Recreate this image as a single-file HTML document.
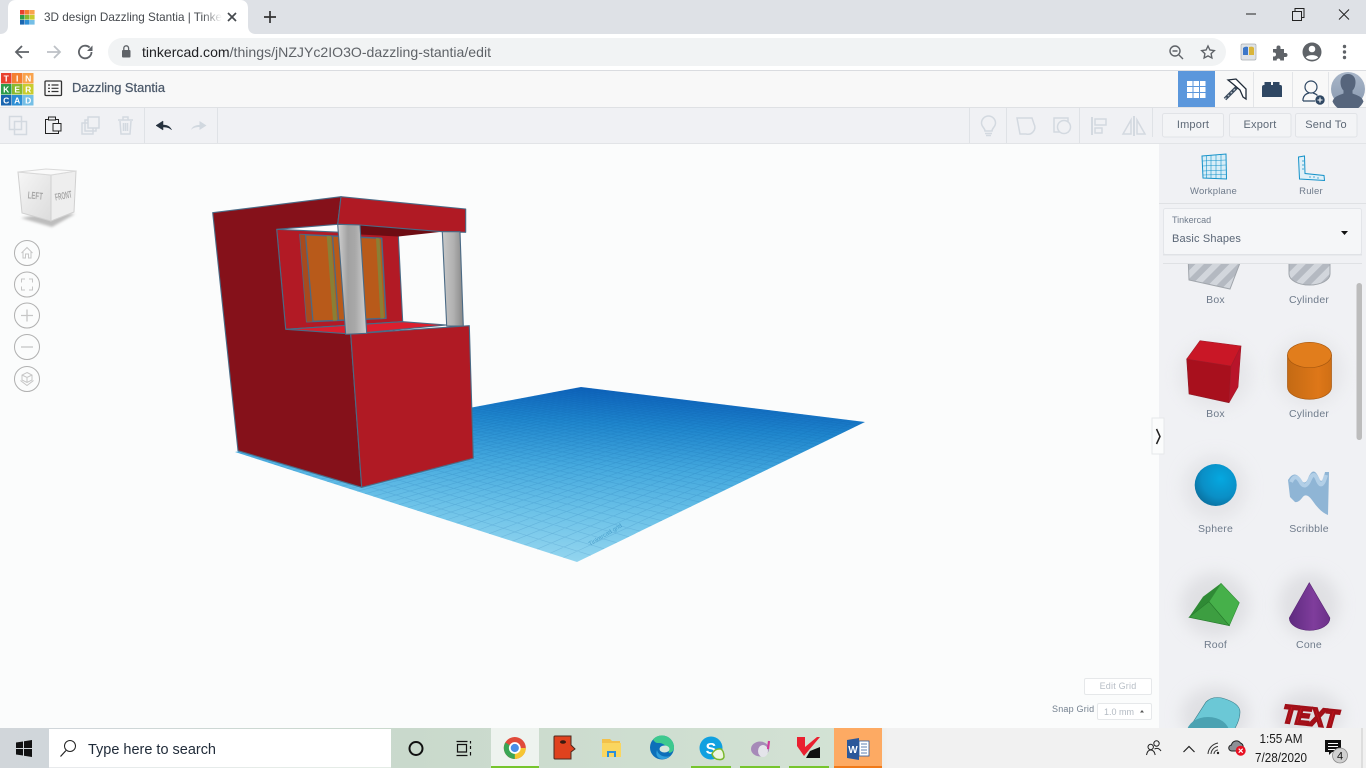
<!DOCTYPE html>
<html lang="en"><head><meta charset="utf-8"><title>3D design Dazzling Stantia | Tinkercad</title>
<style>
html,body{margin:0;padding:0;width:1366px;height:768px;overflow:hidden;background:#fbfcfc}
svg{display:block;position:absolute;left:0;top:0}
text{font-family:"Liberation Sans",sans-serif}
.l{font-size:10.5px;fill:#6f7b8b;text-anchor:middle;letter-spacing:.2px}
.ic{fill:none;stroke:#d3d9e0;stroke-width:1.5}
.nav{fill:none;stroke:#b0b0b0;stroke-width:1}
.nv2{fill:none;stroke:#c6c6c6;stroke-width:1}
</style></head><body>
<svg width="1366" height="768" viewBox="0 0 1366 768" xmlns="http://www.w3.org/2000/svg">
<defs>
<linearGradient id="gp" gradientUnits="userSpaceOnUse" x1="581" y1="387" x2="571" y2="562"><stop offset="0" stop-color="#0d62bb"/><stop offset=".2" stop-color="#1f86cd"/><stop offset=".45" stop-color="#45a9de"/><stop offset=".72" stop-color="#6cc2e8"/><stop offset="1" stop-color="#93d5ef"/></linearGradient>
<linearGradient id="p1" x1="0" x2="1" y1="0" y2="0"><stop offset="0" stop-color="#d2d2d2"/><stop offset=".35" stop-color="#a2a2a2"/><stop offset=".6" stop-color="#a8a8a8"/><stop offset="1" stop-color="#cfcfcf"/></linearGradient>
<linearGradient id="p2" x1="0" x2="1" y1="0" y2="0"><stop offset="0" stop-color="#c8c8c8"/><stop offset=".55" stop-color="#b0b0b0"/><stop offset="1" stop-color="#868686"/></linearGradient>
<linearGradient id="tb" x1="0" x2="1" y1="0" y2="0"><stop offset="0" stop-color="#d1d6da"/><stop offset=".045" stop-color="#d0d6da"/><stop offset=".3" stop-color="#c9d9cc"/><stop offset=".62" stop-color="#d3e2d4"/><stop offset=".65" stop-color="#f1f1f1"/><stop offset="1" stop-color="#f1f1f1"/></linearGradient>
<linearGradient id="cube" x1="0" x2="1" y1="0" y2="1"><stop offset="0" stop-color="#f6f6f6"/><stop offset="1" stop-color="#dcdcdc"/></linearGradient>
<linearGradient id="ocyl" x1="0" x2="1" y1="0" y2="0"><stop offset="0" stop-color="#c46a14"/><stop offset=".7" stop-color="#de7718"/><stop offset="1" stop-color="#cf6f15"/></linearGradient>
<radialGradient id="sph" cx=".62" cy=".35" r=".75"><stop offset="0" stop-color="#05a8e0"/><stop offset=".6" stop-color="#0a8fc6"/><stop offset="1" stop-color="#0a6a98"/></radialGradient>
<linearGradient id="con" x1="0" x2="1" y1="0" y2="0"><stop offset="0" stop-color="#5f2b80"/><stop offset=".6" stop-color="#7f3d9c"/><stop offset="1" stop-color="#6c3189"/></linearGradient>
<linearGradient id="av" x1="0" x2="0" y1="0" y2="1"><stop offset="0" stop-color="#a8b6c9"/><stop offset="1" stop-color="#8a9ab0"/></linearGradient>
<linearGradient id="fade" x1="0" x2="1" y1="0" y2="0"><stop offset="0" stop-color="#fff" stop-opacity="0"/><stop offset="1" stop-color="#fff"/></linearGradient>
<pattern id="st" width="12" height="12" patternUnits="userSpaceOnUse" patternTransform="rotate(45)"><rect width="12" height="12" fill="#b4b9c1"/><rect width="6" height="12" fill="#d2d6dc"/></pattern>
<filter id="b" x="-50%" y="-50%" width="200%" height="200%"><feGaussianBlur stdDeviation="8"/></filter>
<filter id="b2" x="-50%" y="-50%" width="200%" height="200%"><feGaussianBlur stdDeviation="1.2"/></filter>
<clipPath id="sideclip"><rect x="1160" y="264" width="206" height="464"/></clipPath>
</defs>

<!-- browser chrome -->
<rect width="1366" height="34" fill="#dee1e6"/>
<rect y="34" width="1366" height="36" fill="#fff"/>
<rect y="70" width="1366" height="1" fill="#dadce0"/>
<path d="M0 34C5 34 8 31 8 26V8C8 3 11 0 16 0H240C245 0 248 3 248 8V26C248 31 251 34 256 34Z" fill="#fff"/>
<g>
<rect x="20" y="10" width="4.600" height="4.600" fill="#e8412e"/><rect x="25" y="10" width="4.600" height="4.600" fill="#f47f30"/><rect x="30" y="10" width="4.600" height="4.600" fill="#f9a34d"/>
<rect x="20" y="15" width="4.600" height="4.600" fill="#2e9b4a"/><rect x="25" y="15" width="4.600" height="4.600" fill="#8ab92e"/><rect x="30" y="15" width="4.600" height="4.600" fill="#c9cc2e"/>
<rect x="20" y="20" width="4.600" height="4.600" fill="#1a66b0"/><rect x="25" y="20" width="4.600" height="4.600" fill="#2d8fd5"/><rect x="30" y="20" width="4.600" height="4.600" fill="#75bfe6"/>
</g>
<text x="44" y="21" font-size="12" fill="#45494e" textLength="178" lengthAdjust="spacingAndGlyphs">3D design Dazzling Stantia | Tinke</text>
<rect x="202" y="8" width="20" height="20" fill="url(#fade)"/>
<path d="M228 13l8 8M236 13l-8 8" stroke="#45494e" stroke-width="1.700" fill="none"/>
<path d="M270 11v12M264 17h12" stroke="#333" stroke-width="1.700" fill="none"/>
<path d="M1246 14h10" stroke="#222" stroke-width="1"/>
<path d="M1292.500 11.500h9v9h-9zM1295 11v-2.500h9v9h-2.500" stroke="#222" stroke-width="1" fill="none"/>
<path d="M1339 9.500l10 10M1349 9.500l-10 10" stroke="#222" stroke-width="1" fill="none"/>

<path d="M29 52H17M22 46l-6 6 6 6" stroke="#5f6368" stroke-width="1.800" fill="none"/>
<path d="M47 52h12M54 46l6 6-6 6" stroke="#bdc1c6" stroke-width="1.800" fill="none"/>
<path d="M91.500 52a6.300 6.300 0 1 1-1.900-4.500" stroke="#5f6368" stroke-width="1.800" fill="none"/><path d="M92.500 45.500v5.500h-5.500z" fill="#5f6368"/>
<rect x="108" y="38" width="1118" height="28" rx="14" fill="#f1f3f4"/>
<rect x="122" y="50" width="8.500" height="7.500" rx="1" fill="#5f6368"/><path d="M123.800 50v-1.800a2.400 2.400 0 0 1 4.800 0V50" stroke="#5f6368" stroke-width="1.300" fill="none"/>
<text x="142" y="57" font-size="14" fill="#5f6368" textLength="349" lengthAdjust="spacingAndGlyphs"><tspan fill="#202124">tinkercad.com</tspan>/things/jNZJYc2IO3O-dazzling-stantia/edit</text>
<circle cx="1175" cy="51" r="5" stroke="#5f6368" stroke-width="1.400" fill="none"/><path d="M1172.500 51h5M1179 55l4 4" stroke="#5f6368" stroke-width="1.400" fill="none"/>
<path d="M1208 46l1.900 4 4.400.6-3.200 3 .8 4.400-3.900-2.100-3.900 2.100.8-4.400-3.200-3 4.400-.6z" stroke="#5f6368" stroke-width="1.400" fill="none"/>
<rect x="1241" y="44" width="15" height="16" rx="1.500" fill="#dfe3e6" stroke="#a9aeb2" stroke-width=".7"/><path d="M1243 48q2-2 5-1v8h-5z" fill="#3d78c9"/><path d="M1249 47q4-1 5 1v7h-5z" fill="#d9b53a"/>
<path d="M1273 49h3.500v-1.500a2 2 0 0 1 4 0V49h3.500v4h1.500a2 2 0 0 1 0 4H1284v3.500h-3.800v-1a2 2 0 0 0-3.500 0v1H1273v-4h1a2 2 0 0 0 0-4h-1z" fill="#5f6368"/>
<circle cx="1312" cy="52" r="9.500" fill="#5f6368"/><circle cx="1312" cy="49" r="3.300" fill="#fff"/><path d="M1305.800 57.500c1.500-3.200 10.900-3.200 12.400 0-3 3-9.400 3-12.400 0z" fill="#fff"/>
<circle cx="1344.500" cy="46.500" r="1.700" fill="#5f6368"/><circle cx="1344.500" cy="52" r="1.700" fill="#5f6368"/><circle cx="1344.500" cy="57.500" r="1.700" fill="#5f6368"/>

<!-- tinkercad header -->
<rect y="71" width="1366" height="36" fill="#f8f8f8"/>
<rect y="107" width="1366" height="1" fill="#dfe1e4"/>
<g font-size="8.500" font-weight="bold" fill="#fff" text-anchor="middle">
<rect x="1" y="73" width="10.500" height="10.500" fill="#e8412e"/><text x="6.200" y="81.500">T</text>
<rect x="12" y="73" width="10.500" height="10.500" fill="#f47f30"/><text x="17.200" y="81.500">I</text>
<rect x="23" y="73" width="10.500" height="10.500" fill="#f9a34d"/><text x="28.200" y="81.500">N</text>
<rect x="1" y="84" width="10.500" height="10.500" fill="#2e9b4a"/><text x="6.200" y="92.500">K</text>
<rect x="12" y="84" width="10.500" height="10.500" fill="#8ab92e"/><text x="17.200" y="92.500">E</text>
<rect x="23" y="84" width="10.500" height="10.500" fill="#c9cc2e"/><text x="28.200" y="92.500">R</text>
<rect x="1" y="95" width="10.500" height="10.500" fill="#1a66b0"/><text x="6.200" y="103.500">C</text>
<rect x="12" y="95" width="10.500" height="10.500" fill="#2d8fd5"/><text x="17.200" y="103.500">A</text>
<rect x="23" y="95" width="10.500" height="10.500" fill="#75bfe6"/><text x="28.200" y="103.500">D</text>
</g>
<rect x="45" y="81" width="16.500" height="14.500" rx="1" fill="none" stroke="#333" stroke-width="1.300"/>
<path d="M48 85h2M48 88.300h2M48 91.500h2M51.500 85h7M51.500 88.300h7M51.500 91.500h7" stroke="#333" stroke-width="1.200"/>
<text x="72" y="92" font-size="12.500" fill="#4d5a6b" stroke="#4d5a6b" stroke-width=".25" textLength="93" lengthAdjust="spacingAndGlyphs">Dazzling Stantia</text>
<rect x="1178" y="71" width="37" height="36" fill="#5b97dc"/>
<g fill="#fff"><rect x="1187" y="81" width="5.500" height="5"/><rect x="1193.500" y="81" width="5.500" height="5"/><rect x="1200" y="81" width="5.500" height="5"/><rect x="1187" y="87" width="5.500" height="5"/><rect x="1193.500" y="87" width="5.500" height="5"/><rect x="1200" y="87" width="5.500" height="5"/><rect x="1187" y="93" width="5.500" height="5"/><rect x="1193.500" y="93" width="5.500" height="5"/><rect x="1200" y="93" width="5.500" height="5"/></g>
<path d="M1253.500 72v35M1292.500 72v35M1328.500 72v35" stroke="#e3e5e8"/>
<path d="M1225 99l13-13" stroke="#3a4a5c" stroke-width="3.500"/><path d="M1225 99l13-13" stroke="#b9c1ca" stroke-width="1.200" stroke-dasharray="2 2"/>
<path d="M1228 80L1236 79L1246 89L1246 99L1243 97L1240 90L1233 84Z" fill="#fff" stroke="#1f2a38" stroke-width="1.300"/>
<path d="M1262 97V87q0-2 2-2h0.500v-3h6.500v3h2v-3h6.500v3h1q1.500 0 1.500 2v10z" fill="#2f4763"/>
<circle cx="1311" cy="87" r="6" fill="none" stroke="#2f4763" stroke-width="1.200"/>
<path d="M1303 101v-2q1-5 6-6M1313 93q3 .8 4.500 2.500M1303 101h12" fill="none" stroke="#2f4763" stroke-width="1.200"/>
<circle cx="1320" cy="100" r="4.700" fill="#2f4763"/><path d="M1317.500 100h5M1320 97.500v5" stroke="#fff" stroke-width="1.100"/>
<circle cx="1348" cy="89" r="17" fill="url(#av)"/>
<path d="M1348 74c-5 0-7.500 3.500-7.500 8 0 3.500 1 6.500 3 8.500v3c-3 1.500-9 2-11 8a17 17 0 0 0 31 0c-2-6-8-6.500-11-8v-3c2-2 3-5 3-8.500 0-4.500-2.500-8-7.500-8z" fill="#56657c"/>

<!-- toolbar -->
<rect y="108" width="1366" height="35" fill="#f0f1f4"/>
<rect y="143" width="1366" height="1" fill="#e2e4e7"/>
<path d="M144.500 108v35M217.500 108v35M969.500 108v35M1006.500 108v35M1079.500 108v35M1152.500 108v29" stroke="#dfe2e6"/>
<g class="ic">
<rect x="9.500" y="116.500" width="12" height="13"/><rect x="14.500" y="121.500" width="12" height="13"/>
<rect x="82" y="123" width="11" height="11"/><rect x="85" y="120" width="11" height="11" /><rect x="88" y="117" width="11" height="11" fill="#f0f1f4"/>
<path d="M120 121l1 13h9l1-13M118 120h15M123 120v-3h5v3M123.500 123v8M125.500 123v8M127.500 123v8"/>
<path d="M985 131c0-3-3.500-4-3.500-8a7 7 0 0 1 14 0c0 4-3.500 5-3.500 8zM985 133.500h7M986 135.500h5" />
<path d="M1017 118h15l2 6a7 7 0 0 1-8 10h-6z"/>
<rect x="1054" y="118" width="14" height="14" /><circle cx="1064" cy="127" r="6.500" fill="#f0f1f4"/>
<path d="M1092 117v18" stroke-width="2"/><rect x="1095" y="119" width="11" height="6"/><rect x="1095" y="128" width="7" height="5"/>
<path d="M1134 116v20" stroke-width="2"/><path d="M1131 120v14h-8zM1137 120v14h8z"/>
</g>
<rect x="45.500" y="119.500" width="13" height="14" fill="none" stroke="#222" stroke-width="1"/><rect x="48.500" y="117" width="7" height="3" fill="#f0f1f4" stroke="#222" stroke-width="1"/><rect x="53" y="123.500" width="8" height="7.500" fill="#f0f1f4" stroke="#222" stroke-width="1"/>
<path d="M171.500 130c-1-3.500-4.500-5-8.500-5v-4l-7 4.500 7 4.500v-3c3 0 6.500 .5 8.500 3z" fill="#26323f" stroke="#26323f" stroke-width=".5"/>
<path d="M191 130c1-3.500 4.500-5 8.500-5v-4l7 4.500-7 4.500v-3c-3 0-6.500 .5-8.500 3z" fill="#d1d8df"/>
<g fill="#f3f4f6" stroke="#e1e3e7"><rect x="1162.500" y="113.500" width="61" height="23.500" rx="2"/><rect x="1229.500" y="113.500" width="61.500" height="23.500" rx="2"/><rect x="1295.500" y="113.500" width="61.500" height="23.500" rx="2"/></g>
<g font-size="11" fill="#5d6876" text-anchor="middle" letter-spacing=".2"><text x="1193" y="128">Import</text><text x="1260" y="128">Export</text><text x="1326" y="128">Send To</text></g>

<!-- canvas -->
<rect y="144" width="1159" height="584" fill="#fbfcfc"/>

<!-- workplane -->
<polygon points="581,387 865,422 577,562 235,452" fill="url(#gp)"/>
<g id="grid" stroke="#0a5a9e" stroke-opacity=".16" stroke-width=".6"></g>
<text x="590" y="546" font-size="6" fill="#2c86b8" opacity=".6" transform="rotate(-31 590 546)">Tinkercad grid</text>

<!-- model -->
<g stroke="#4a6a85" stroke-width="1.100" stroke-linejoin="round">
<polygon points="276.700,229.300 398.300,235 402.700,321.700 285.700,329.300" fill="#b21a25"/>
<polygon points="360,225 442,231.700 398.300,236.500 360,234.500" fill="#6d0c13" stroke="none"/>
<polygon points="300,234.500 381.700,238.300 386,318.300 306.700,321.700" fill="#b85a1a" stroke-width="1.500"/>
<polygon points="300,234.500 305.500,235 313,321.500 306.700,321.700" fill="#a84a1e" stroke="none"/>
<polygon points="326.700,235.700 331,236 337,320.500 333,320.700" fill="#8a7f35" stroke="none"/>
<polygon points="376,238 379.500,238.200 384,318.300 380.500,318.500" fill="#8a7f35" stroke="none"/>
<path d="M305.500 235l7.500 86.500M332.500 236l6 85" fill="none" stroke-width="1.300"/>
<polygon points="285.700,329.300 402.700,321.700 446.700,325 350.700,334" fill="#db1f2e"/>
<polygon points="212.700,212.700 341,196.700 337.700,224.300 276.700,229.300 285.700,329.300 350.700,334 361.700,487.300 238,450.700" fill="#85111a"/>
<polygon points="341,196.700 465.700,209 465.700,232.300 442,231.700 360,225 337.700,224.300" fill="#b01a24"/>
<polygon points="442.300,231.700 460,231.700 463.300,326 446.700,326" fill="url(#p2)"/>
<polygon points="350.700,334 469.300,325.700 473.300,458.300 361.700,487.300" fill="#b01a24"/>
<polygon points="337.700,224.300 360,225 366.700,333.300 345.700,334.300" fill="url(#p1)"/>
</g>

<!-- cube -->
<polygon points="21,218 52,227 75,214 52,212" fill="#bdbdbd" filter="url(#b2)"/>
<polygon points="18,172 51,175 51,221 22,213" fill="url(#cube)" stroke="#d0d0d0"/>
<polygon points="51,175 76,171 74,212 51,221" fill="#eeeeee" stroke="#d0d0d0"/>
<polygon points="18,172 46,169 76,171 51,175" fill="#fafafa" stroke="#d9d9d9"/>
<text x="35" y="199" font-size="10" font-weight="bold" fill="#a6a6a6" text-anchor="middle" transform="rotate(5 35 199)" textLength="15" lengthAdjust="spacingAndGlyphs">LEFT</text>
<text x="64" y="199" font-size="10" font-weight="bold" fill="#a6a6a6" text-anchor="middle" transform="rotate(-11 64 199)" textLength="17" lengthAdjust="spacingAndGlyphs">FRONT</text>
<!-- nav -->
<g class="nav"><circle cx="27" cy="253" r="12.500"/><circle cx="27" cy="284.500" r="12.500"/><circle cx="27" cy="315.500" r="12.500"/><circle cx="27" cy="347" r="12.500"/><circle cx="27" cy="379" r="12.500"/></g>
<g class="nv2">
<path d="M21.500 253l5.500-5.500 5.500 5.500M23 252v6h2.500v-4h3v4h2.500v-6"/>
<path d="M21.500 282.500v-3.500h3.500M29 279h3.500v3.500M32.500 286.500v3.500H29M25 290h-3.500v-3.500"/>
<path d="M21 315.500h12M27 309.500v12" stroke-width="1.300"/>
<path d="M21 347h12" stroke-width="1.300"/>
<path d="M27 372.500l5 2.500v5l-5 2.500-5-2.500v-5zM22 375l5 2.500 5-2.500M27 377.500v5M20.500 380.500l6.500 5 6.500-5"/>
</g>
<g fill="#fff" stroke="#e6e8ea"><rect x="1084.500" y="678.500" width="67" height="16" rx="1.500"/><rect x="1097.500" y="703.500" width="54" height="16" rx="1.500"/></g>
<text x="1118" y="689" font-size="9" fill="#b7bec6" text-anchor="middle" letter-spacing=".2">Edit Grid</text>
<text x="1052" y="712" font-size="9" fill="#74808f" letter-spacing=".2">Snap Grid</text>
<text x="1104" y="715" font-size="9" fill="#b3bac2">1.0 mm</text>
<path d="M1140 712.500l2-2.500 2 2.500z" fill="#555"/>

<!-- sidebar -->
<rect x="1159" y="144" width="207" height="584" fill="#f0f1f4"/>
<rect x="1159" y="203" width="207" height="1" fill="#dfe1e4"/>
<path d="M1152 418h12v36h-12z" fill="#fbfcfc" stroke="#e6e8ea"/>
<path d="M1156.500 429l3.500 7.500-3.500 7.500" stroke="#222" stroke-width="1.500" fill="none"/>
<g stroke="#1592c9" fill="none" stroke-width="1">
<path d="M1202 156l24-2 .5 25-23.500-1z" fill="#d7edf7"/>
<path d="M1206.500 156v22.500M1211 155.500v23M1216 155v23.500M1221 155v24M1202.500 161l23.500-1M1202.500 166l23.500-1M1203 171l23.500-1M1203 175l23.500-.5" stroke-width=".6"/>
<path d="M1298.500 157l6-1 .5 17.500 19 2 .5 5-25-1.500z" fill="#e0f0f8"/>
<path d="M1302 161h2M1302 165h2M1302 169h2M1310 176v2M1314 176v2M1318 177v2" stroke-width=".7"/>
</g>
<text x="1213.500" y="194" class="l" style="font-size:9.500px">Workplane</text>
<text x="1311" y="194" class="l" style="font-size:9.500px">Ruler</text>
<rect x="1163.500" y="208.500" width="198" height="46" rx="2" fill="#f5f6f8" stroke="#e3e5e9"/>
<rect x="1163" y="254" width="199" height="1.500" fill="#e0e2e6"/>
<text x="1172" y="223" font-size="9" fill="#6f7b8b">Tinkercad</text>
<text x="1172" y="242" font-size="11" fill="#5a6676" letter-spacing=".15">Basic Shapes</text>
<path d="M1341 231h7l-3.500 4z" fill="#111"/>
<rect x="1163" y="263" width="199" height="1" fill="#dfe1e4"/>
<rect x="1356.500" y="283" width="5.500" height="157" rx="2.700" fill="#bcbcbc"/>

<g clip-path="url(#sideclip)">
<polygon points="1188,255 1243,255 1230,289 1189,280" fill="url(#st)" stroke="#a0a5ab"/>
<path d="M1289 250v24a20.500 11 0 0 0 41 0v-24z" fill="url(#st)" stroke="#a0a5ab"/>
<ellipse cx="1215" cy="375" rx="36" ry="34" fill="#d8d8dc" opacity=".45" filter="url(#b)"/>
<ellipse cx="1309" cy="372" rx="34" ry="34" fill="#d8d8dc" opacity=".45" filter="url(#b)"/>
<ellipse cx="1215" cy="488" rx="32" ry="32" fill="#d8d8dc" opacity=".5" filter="url(#b)"/>
<ellipse cx="1215" cy="605" rx="34" ry="32" fill="#d4d4d8" opacity=".6" filter="url(#b)"/>
<ellipse cx="1309" cy="605" rx="30" ry="32" fill="#d4d4d8" opacity=".6" filter="url(#b)"/>
<ellipse cx="1215" cy="715" rx="34" ry="28" fill="#d4d4d8" opacity=".6" filter="url(#b)"/>
<ellipse cx="1309" cy="715" rx="34" ry="24" fill="#d4d4d8" opacity=".6" filter="url(#b)"/>

<polygon points="1186.700,359 1231,366 1229,402.700 1189,394" fill="#a8101d" stroke="#8d1a26" stroke-width=".6"/>
<polygon points="1241,346 1238,387 1229,402.700 1231,366" fill="#b8142a" stroke="#a31a28" stroke-width=".6"/>
<polygon points="1200,340.700 1241,346 1231,366 1186.700,359" fill="#c91726" stroke="#a31a28" stroke-width=".6"/>

<path d="M1287.500 355v32a21.500 12 0 0 0 44 0v-32z" fill="url(#ocyl)" stroke="#a8580f" stroke-width=".7"/>
<ellipse cx="1309.500" cy="355" rx="22" ry="12.700" fill="#e17d1c" stroke="#a8580f" stroke-width=".7"/>

<circle cx="1215.700" cy="485" r="21" fill="url(#sph)"/>

<path d="M1288 480Q1294 470 1300 478Q1305 488 1309 476Q1314 466 1319 478Q1322 486 1325 472L1329 472L1328 515Q1320 512 1312 500Q1306 492 1302 498Q1298 503 1295 502L1290 497Z" fill="#8fb5d5"/>
<path d="M1291 482Q1295 473 1300 481Q1305 491 1310 479Q1314 470 1318 481Q1322 490 1326 475" fill="none" stroke="#b2cfe7" stroke-width="4"/>

<polygon points="1221,583.300 1239.300,602.700 1229.300,625.700 1209,601.700" fill="#46b04a" stroke="#2e8f33" stroke-width=".6"/>
<polygon points="1221,583.300 1203,596.700 1189,617.300 1209,601.700" fill="#2f8a35"/>
<polygon points="1209,601.700 1229.300,625.700 1189,617.300" fill="#3d9e41" stroke="#24782a" stroke-width=".6"/>

<path d="M1309.300 582.700L1289.300 618a20.300 12.300 0 0 0 40.600 0z" fill="url(#con)" stroke="#592575" stroke-width=".6"/>

<path d="M1188 730L1206 702Q1212 696 1222 698Q1240 703 1240 712Q1240 720 1234 730Z" fill="#6bc8d6" stroke="#3a7d8a" stroke-width=".6"/>
<ellipse cx="1208" cy="732" rx="21" ry="15" fill="#4ba2b2"/>

<text x="1283" y="725" font-size="25" font-weight="bold" font-style="italic" fill="#c8151f" stroke="#a00f18" stroke-width="2.600" textLength="55" lengthAdjust="spacingAndGlyphs" transform="rotate(6 1310 715)">TEXT</text>
</g>

<g class="l">
<text x="1215.500" y="303">Box</text><text x="1309" y="303">Cylinder</text>
<text x="1215.500" y="417">Box</text><text x="1309" y="417">Cylinder</text>
<text x="1215.500" y="532">Sphere</text><text x="1309" y="532">Scribble</text>
<text x="1215.500" y="648">Roof</text><text x="1309" y="648">Cone</text>
</g>

<!-- taskbar -->
<rect y="728" width="1366" height="40" fill="url(#tb)"/>
<rect x="49" y="729" width="342" height="38.500" fill="#fff"/>
<g fill="#111"><path d="M16 742.500l7-1v6.500h-7zM24 741.300l8-1.300v8h-8zM16 749h7v6.500l-7-1zM24 749h8v8l-8-1.300z"/></g>
<circle cx="70" cy="746" r="5.500" fill="none" stroke="#222" stroke-width="1"/><path d="M66 750.500l-5.500 6" stroke="#222" stroke-width="1.200"/>
<text x="88" y="754" font-size="14.500" fill="#1f2a38" textLength="128" lengthAdjust="spacingAndGlyphs">Type here to search</text>
<circle cx="416" cy="748.500" r="6.500" fill="none" stroke="#111" stroke-width="2"/>
<path d="M456.500 741.500h11M457.500 744.500h9v7.500h-9zM456.500 755.500h11M470.500 741v2.500M470.500 746v3M470.500 752v3.500" stroke="#111" stroke-width="1.200" fill="none"/>

<rect x="491" y="728" width="48" height="40" fill="#eef3ef"/>
<circle cx="514.800" cy="748" r="11" fill="#e04a3a"/>
<path d="M514.800 748L505.300 742.500A11 11 0 0 0 509.300 757.500z" fill="#3aa655"/><path d="M520.300 748l-5.500 11A11 11 0 0 1 509.300 757.500L514.800 748z" fill="#3aa655"/>
<path d="M514.800 748h11a11 11 0 0 1-11 11z" fill="#f6c632"/>
<circle cx="514.800" cy="748" r="5" fill="#4a8ee8" stroke="#fff" stroke-width="1.800"/>

<path d="M555 736h16v9l4 4-4 3v7h-16q-1 0-1-1v-21q0-1 1-1z" fill="#e0421e" stroke="#4a2a20" stroke-width="1"/><ellipse cx="563" cy="742" rx="3" ry="1.800" fill="#3a1a10"/>
<path d="M602 739h8l2 2h8v16h-18z" fill="#f3c14a"/><path d="M602 743h19v14h-19z" fill="#fad65f"/><path d="M607 757v-6h9v6h-2v-4h-5v4z" fill="#2a8fdc"/>
<circle cx="662" cy="747.500" r="12" fill="#0d6fb9"/>
<path d="M653 739.500A12 12 0 0 1 674 747.500c0 3-2 5-5 5.500-1-6-5-10-10-10-2 0-4 0-6-3.500z" fill="#3ec98e"/>
<ellipse cx="664.500" cy="749" rx="5" ry="3.500" fill="#d6e6da"/>
<path d="M657 750c1 5 7 8 13 6-3 3-8 4-11 2-3-2-3-5-2-8z" fill="#2f9fdc"/>
<circle cx="711" cy="748" r="11.500" fill="#10a0e0"/><text x="711" y="754" font-size="16" font-weight="bold" fill="#fff" text-anchor="middle">S</text>
<path d="M712 754q3-6 9-5 3 2 3 8-1 3-5 2.500-5 0-7-5.500z" fill="#eef5e0" stroke="#7ab82e" stroke-width="1.500"/>
<ellipse cx="760" cy="749" rx="9" ry="7.500" fill="#a68ab8"/><ellipse cx="763" cy="751" rx="5" ry="6" fill="#e4e4ea"/><path d="M769 741l-1 8" stroke="#d03a9a" stroke-width="2.200"/>
<path d="M797 737h8v10l12-10h3l-11 13-5 6-7-10z" fill="#ea2030"/><path d="M810 751l10-4v11h-14z" fill="#111"/>
<rect x="834" y="728" width="48" height="40" fill="#fdaa63"/>
<path d="M847 740l12-2v22l-12-2z" fill="#2b579a"/><rect x="859" y="741" width="10" height="15" fill="#fff" stroke="#2b579a" stroke-width=".8"/><path d="M861 744h6M861 747h6M861 750h6M861 753h6" stroke="#2b579a" stroke-width=".8"/>
<text x="853" y="753" font-size="10" font-weight="bold" fill="#fff" text-anchor="middle">W</text>
<g fill="#76c52d"><rect x="491" y="766" width="48" height="2"/><rect x="691" y="766" width="40" height="2"/><rect x="740" y="766" width="40" height="2"/><rect x="789" y="766" width="40" height="2"/></g>
<rect x="834" y="766" width="48" height="2" fill="#f07a1a"/>

<g stroke="#222" stroke-width="1" fill="none">
<circle cx="1156.500" cy="743.500" r="2.700"/><circle cx="1150.700" cy="747" r="2.700"/>
<path d="M1146.500 755q1-5 4.200-5 3.500 0 4.500 5M1154.500 749q4-2 6.500 2"/>
<path d="M1183.500 752l5.500-5.500 5.500 5.500" stroke-width="1.200"/>
<path d="M1208 754a12 12 0 0 1 10-11M1211 754a8 8 0 0 1 7-7.500M1214 754a4 4 0 0 1 4-4" stroke="#333"/>
</g>
<circle cx="1218" cy="753" r="1.200" fill="#222"/>
<path d="M1232 751a3 3 0 0 1-.5-6a5 5 0 0 1 9-2a4 4 0 0 1 2 6l-3 2z" fill="#8c9096" stroke="#222" stroke-width="1"/>
<circle cx="1240.700" cy="750.700" r="5" fill="#e81123"/><path d="M1238.700 748.700l4 4M1242.700 748.700l-4 4" stroke="#fff" stroke-width="1.100"/>
<g font-size="12.500" fill="#1a1a1a" text-anchor="middle"><text x="1281" y="743" textLength="43" lengthAdjust="spacingAndGlyphs">1:55 AM</text><text x="1281" y="762" textLength="52" lengthAdjust="spacingAndGlyphs">7/28/2020</text></g>
<path d="M1325 740h16v12h-9l-3 3v-3h-4z" fill="#111"/><path d="M1328 743.500h10M1328 746.500h10M1328 749.500h7" stroke="#fff" stroke-width="1"/>
<circle cx="1340" cy="755.500" r="7.500" fill="#d0d0d0" stroke="#8a8a8a" stroke-width=".8"/>
<text x="1340" y="759.500" font-size="11" fill="#111" text-anchor="middle">4</text>
<rect x="1361.500" y="728" width="1" height="40" fill="#c9c9c9"/>
</svg>
<script>
(function(){
 // project unit square onto workplane quad
 var p=[[581,387],[865,422],[577,562],[235,452]];
 var dx1=p[1][0]-p[2][0],dx2=p[3][0]-p[2][0],sx=p[0][0]-p[1][0]+p[2][0]-p[3][0];
 var dy1=p[1][1]-p[2][1],dy2=p[3][1]-p[2][1],sy=p[0][1]-p[1][1]+p[2][1]-p[3][1];
 var d=dx1*dy2-dx2*dy1,g=(sx*dy2-dx2*sy)/d,h=(dx1*sy-sx*dy1)/d;
 var a=p[1][0]-p[0][0]+g*p[1][0],b=p[3][0]-p[0][0]+h*p[3][0],c=p[0][0];
 var e=p[1][1]-p[0][1]+g*p[1][1],f=p[3][1]-p[0][1]+h*p[3][1],k=p[0][1];
 function m(u,v){var w=g*u+h*v+1;return ((a*u+b*v+c)/w).toFixed(1)+' '+((e*u+f*v+k)/w).toFixed(1);}
 var s='',n=40;
 for(var i=1;i<n;i++){var t=i/n;s+='M'+m(t,0)+'L'+m(t,1)+'M'+m(0,t)+'L'+m(1,t);}
 document.getElementById('grid').innerHTML='<path fill="none" d="'+s+'"/>';
})();
</script>
</body></html>
